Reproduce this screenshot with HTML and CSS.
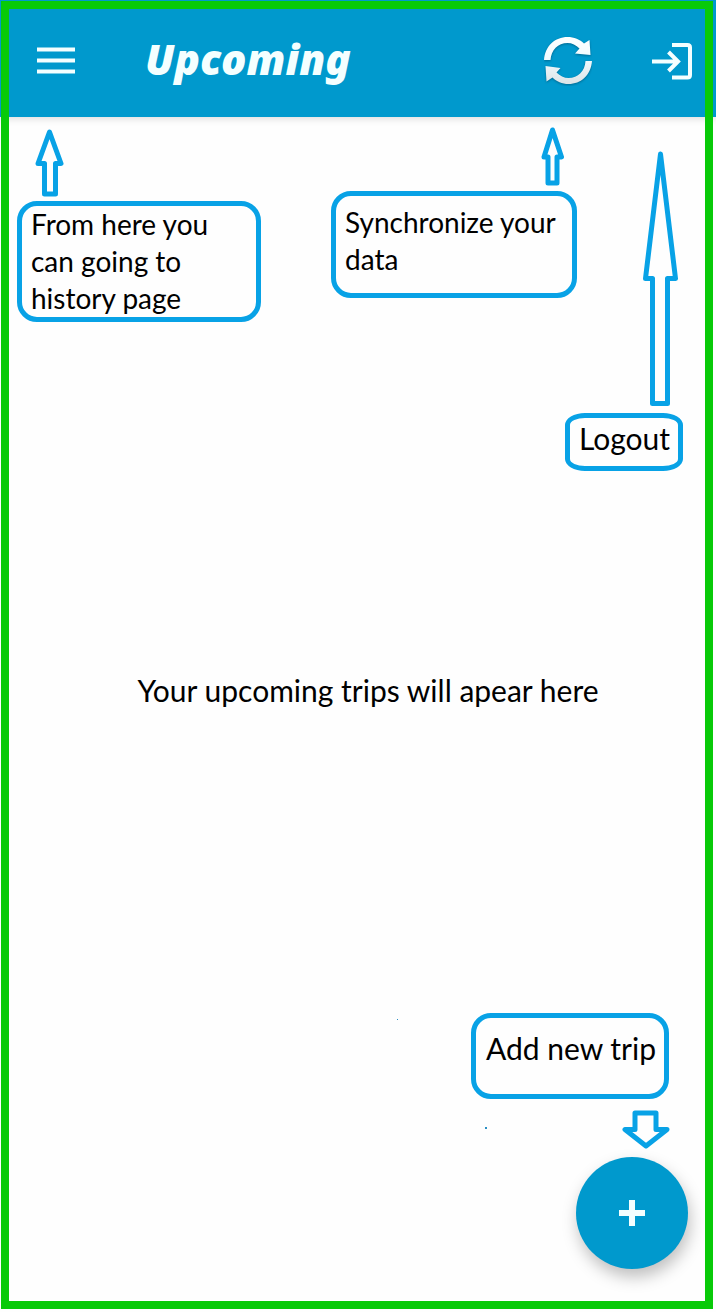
FILE: index.html
```html
<!DOCTYPE html>
<html lang="en">
<head>
<meta charset="utf-8">
<meta name="viewport" content="width=device-width, initial-scale=1">
<title>Upcoming</title>
<link rel="stylesheet" href="styles.css">
</head>
<body>
<div class="page">
  <header class="app-bar">
    <button class="icon-button" type="button" aria-label="Menu">
      <svg width="38" height="28" viewBox="0 0 38 28"><path d="M0 2.500h38M0 13.500h38M0 24.500h38" stroke="#f4ffff" stroke-width="4"/></svg>
    </button>
    <h1 class="title">Upcoming</h1>
    <button class="icon-button" type="button" aria-label="Synchronize">
      <svg width="48" height="50" viewBox="0 0 48 50">
        <defs>
          <linearGradient id="silver" x1="0" y1="0" x2="0" y2="50" gradientUnits="userSpaceOnUse">
            <stop offset="0" stop-color="#ffffff"/><stop offset=".45" stop-color="#f0fbff"/><stop offset="1" stop-color="#dce2e5"/>
          </linearGradient>
        </defs>
        <g class="sync-shape" fill="url(#silver)">
          <path d="M0 24C1 10 11 1 23.500 1C30 1 36 3.500 40 7.500L45.500 4L46.500 19L31 17.500L35.500 12.500C32 9 28 7 23.500 7C14 7 7 14 6.500 24Z"/>
          <path d="M48 25C47 39 37 48 24.500 48C18 48 12.500 45.500 8.500 41.500L2.500 45.500L1.500 30L16.500 32L12.500 36.500C16 40 20 42 24.500 42C34 42 41 35 41.500 25Z"/>
        </g>
      </svg>
    </button>
    <button class="icon-button exit" type="button" aria-label="Logout">
      <svg width="40" height="38" viewBox="0 0 40 38" fill="none" stroke="#f4ffff" stroke-width="4"><path d="M20 3H35.500Q38 3 38 5.500V33Q38 35.500 35.500 35.500H20"/><path d="M0 19.500H26M16.500 10L26 19.500L16.500 29"/></svg>
    </button>
  </header>

  <main class="content">
    <section class="hints">
      <div class="hint hint-history">
        <svg class="arrow arrow-history" width="30" height="68" viewBox="0 0 30 68"><path d="M14.500 3L26 34.500H20.500V65H9.500V34.500H3Z"/></svg>
        <p class="callout">From here you can going to history page</p>
      </div>
      <div class="hint hint-sync">
        <svg class="arrow arrow-sync" width="24" height="60" viewBox="0 0 24 60"><path d="M11.500 3L20.500 30H16V56H7V30H3Z"/></svg>
        <p class="callout">Synchronize your data</p>
      </div>
      <div class="hint hint-logout">
        <svg class="arrow arrow-logout" width="36" height="256" viewBox="0 0 36 256"><path d="M17.500 3L32.500 127.500H24.500V252.500H9.500V127.500H2.500Z"/></svg>
        <p class="callout">Logout</p>
      </div>
    </section>

    <p class="empty">Your upcoming trips will apear here</p>

    <section class="add">
      <p class="callout callout-add">Add new trip</p>
      <svg class="arrow arrow-add" width="48" height="40" viewBox="0 0 48 40"><path d="M13 3H34V19.500H45L24 36L3 19.500H13Z"/></svg>
      <button class="fab" type="button" aria-label="Add new trip">
        <svg width="26" height="26" viewBox="0 0 26 26"><path d="M13 0V26M0 13H26" stroke="#f4ffff" stroke-width="6"/></svg>
      </button>
    </section>
    <span class="speck speck-small"></span>
    <span class="speck speck-large"></span>
  </main>
  <div class="frame"></div>
</div>
</body>
</html>
```
FILE: styles.css
```css
* { box-sizing: border-box; }
body { margin: 0; background: #fefefe; color: #000; font: 28px/37px Lato, "Open Sans", sans-serif; }
p, h1 { margin: 0; }
button { border: 0; padding: 0; background: none; cursor: pointer; }
svg { display: block; flex: none; }

.page { position: relative; display: flex; flex-direction: column; min-height: 100vh; }
.frame { position: absolute; inset: 1px 3px 3px 1px; border: 8px solid #08ca08; pointer-events: none; }

.app-bar { display: flex; align-items: center; height: 117px; padding: 4px 24px 0 37px; background: #0099cd; box-shadow: 0 1px 8px rgba(0, 0, 0, .16); }
.title { flex: 1; margin-left: 70px; padding-bottom: 4px; color: #f4ffff; font: italic 900 42px/48px "Noto Sans", sans-serif; }
.exit { margin-left: 60px; }
.sync-shape { filter: drop-shadow(0 1px 1px rgba(0, 60, 90, .5)); }

.content { display: flex; flex: 1; flex-direction: column; padding-bottom: 43px; }
.hints { display: flex; align-items: flex-start; justify-content: space-between; padding: 10px 33px 0 17px; }
.hint { display: flex; flex-direction: column; }
.callout { border: 5px solid #08a2e6; border-radius: 20px; padding: 0 9px; }
.arrow { fill: none; stroke: #08a2e6; stroke-width: 5; stroke-linejoin: round; }

.hint-history { width: 244px; }
.hint-history .callout { padding-right: 40px; }
.arrow-history { margin: 2px 0 4px 18px; }
.hint-sync { width: 246px; }
.hint-sync .callout { padding: 8px 0 15px 9px; }
.arrow-sync { margin: 0 0 4px 210px; }
.hint-logout { width: 118px; margin-left: -82px; padding-top: 24px; }
.hint-logout .callout { padding: 2px 0 9px 9px; border-radius: 20px / 12px; font-size: 30px; }
.arrow-logout { margin: 0 0 6px 78px; }

.empty { margin: 201px 0 40px; padding-left: 20px; font-size: 30px; text-align: center; }

.add { display: flex; flex-direction: column; align-items: flex-end; margin-top: auto; padding-right: 28px; }
.callout-add { margin-right: 19px; padding: 12px 8px 27px 10px; font-size: 30px; }
.arrow-add { margin: 11px 18px 7px 0; }
.fab { display: grid; place-items: center; width: 112px; height: 112px; border-radius: 50%; background: #0099cd; box-shadow: 2px 8px 16px rgba(0, 0, 0, .25); }

.speck { position: absolute; background: #2a8fc4; }
.speck-small { right: 318px; bottom: 292px; width: 1px; height: 1px; }
.speck-large { right: 229px; bottom: 183px; width: 2px; height: 2px; }
```
